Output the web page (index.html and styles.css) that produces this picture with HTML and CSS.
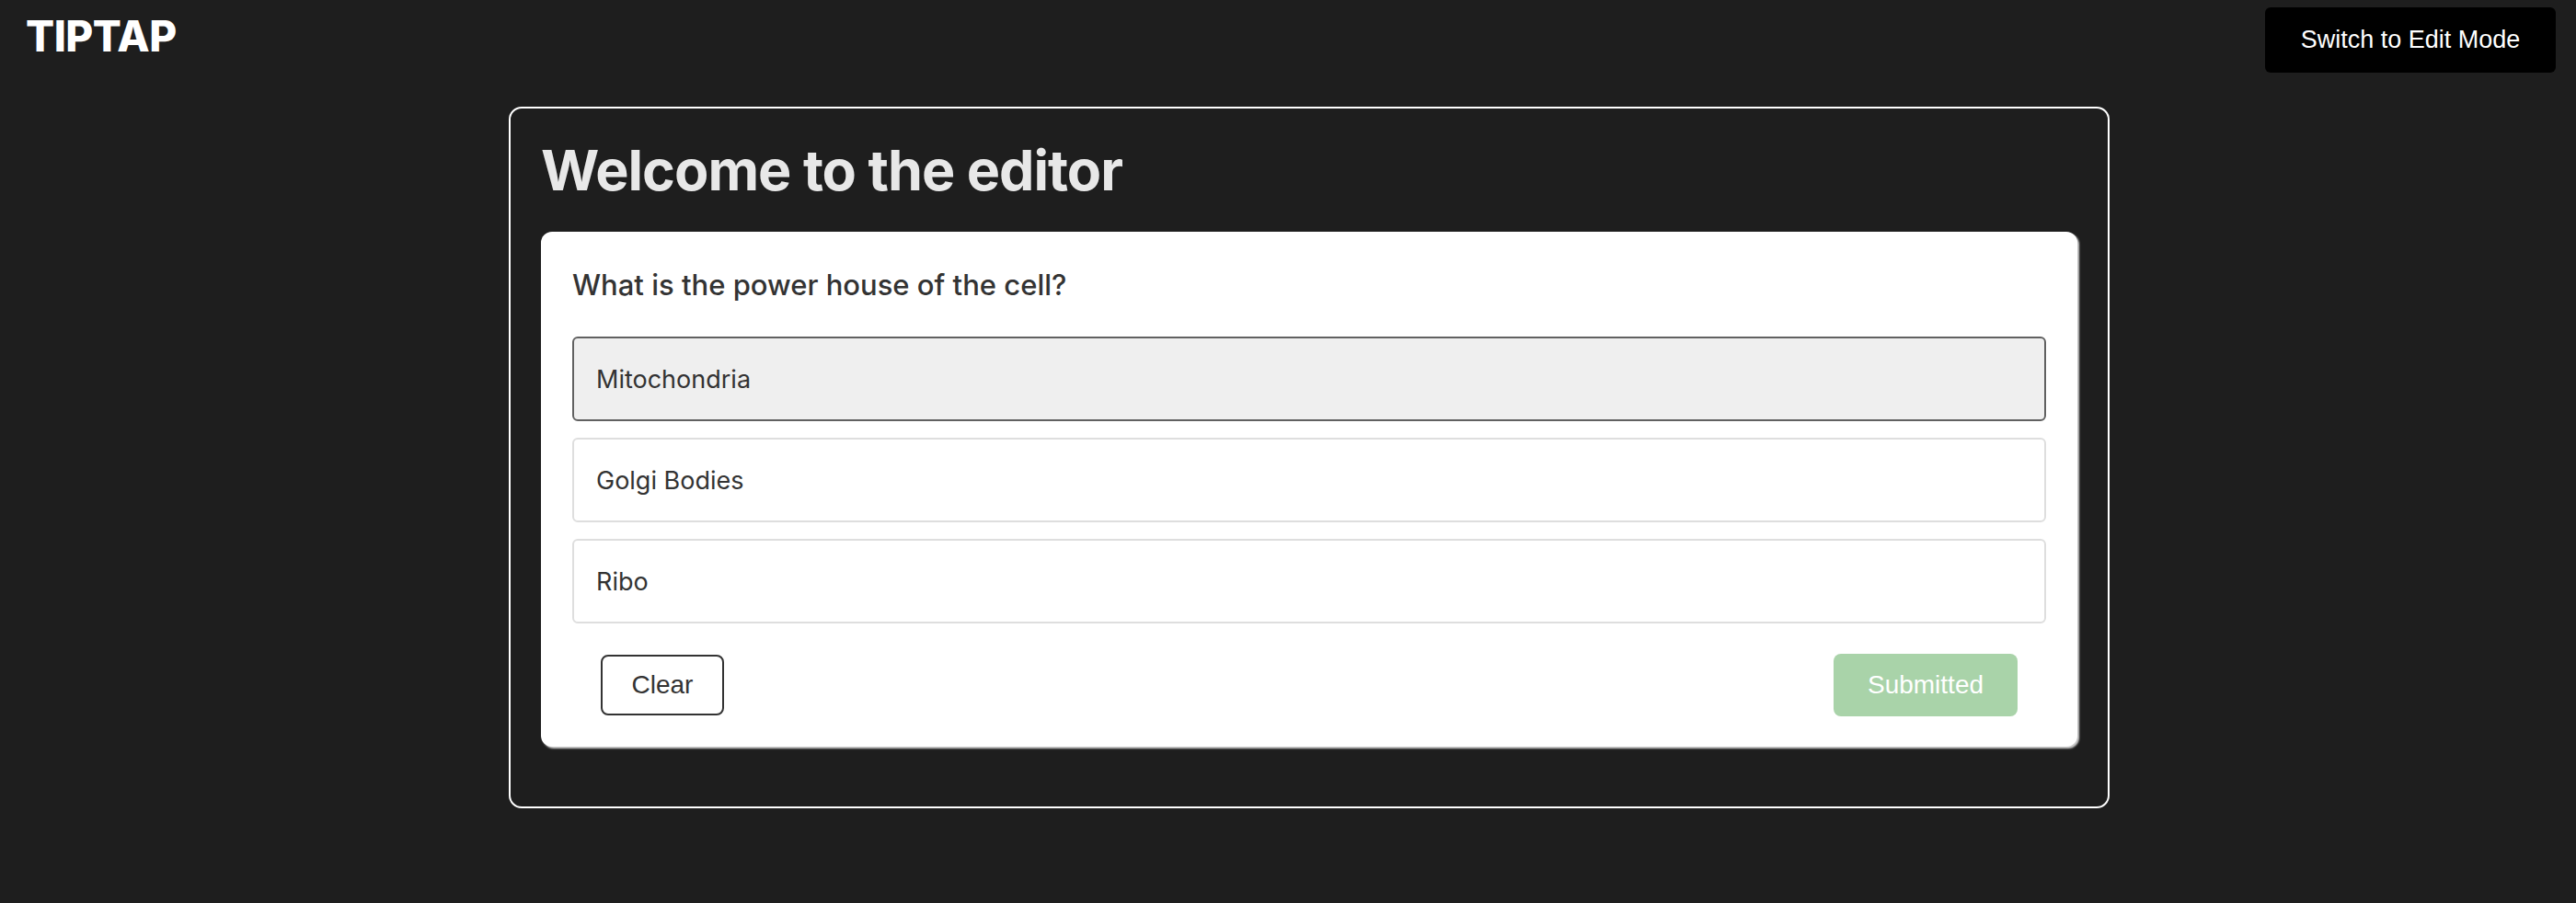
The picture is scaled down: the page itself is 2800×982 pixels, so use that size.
FILE: index.html
```html
<!DOCTYPE html>
<html>
<head>
<meta charset="utf-8">
<link rel="stylesheet" href="styles.css">
</head>
<body>
<header class="topbar">
  <div class="logo">TIPTAP</div>
  <button class="mode-btn">Switch to Edit Mode</button>
</header>
<main class="frame">
  <h1 class="title">Welcome to the editor</h1>
  <section class="quiz">
    <p class="question">What is the power house of the cell?</p>
    <div class="options">
      <div class="option selected">Mitochondria</div>
      <div class="option">Golgi Bodies</div>
      <div class="option">Ribo</div>
    </div>
    <div class="actions">
      <button class="btn-clear">Clear</button>
      <button class="btn-submitted">Submitted</button>
    </div>
  </section>
</main>
</body>
</html>
```
FILE: styles.css
```css
html, body {
  margin: 0;
  padding: 0;
}
body {
  background: #1e1e1e;
  font-family: Inter, "Noto Sans", sans-serif;
  width: 2800px;
  height: 982px;
  overflow: hidden;
}
.topbar {
  display: flex;
  justify-content: space-between;
  align-items: flex-start;
  padding: 8px 22px 0 28px;
}
.logo {
  font-family: Inter, sans-serif;
  font-weight: 800;
  font-size: 46px;
  line-height: 1.21;
  color: #ffffff;
  margin-top: 4px;
  letter-spacing: -0.5px;
}
.mode-btn {
  width: 316px;
  height: 71px;
  background: #000;
  color: #fff;
  border: none;
  border-radius: 6px;
  font-family: "Liberation Sans", Arial, sans-serif;
  font-size: 27px;
  padding: 0;
}
.frame {
  margin: 37px 0 0 553px;
  width: 1740px;
  height: 763px;
  box-sizing: border-box;
  border: 2px solid #ffffff;
  border-radius: 14px;
  padding: 30px 33px 0 33px;
}
.title {
  margin: 0 0 29px 0;
  font-size: 61px;
  font-weight: 700;
  line-height: 1.23;
  color: #e8e8e8;
  letter-spacing: -1px;
}
.quiz {
  box-sizing: border-box;
  background: #fff;
  border-radius: 12px;
  box-shadow: 2px 2px 2px #cfcfcf;
  padding: 40px 34px 33px 34px;
}
.question {
  margin: 0 0 38px 0;
  font-size: 31px;
  font-weight: 500;
  line-height: 1.17;
  color: #333;
}
.options {
  display: flex;
  flex-direction: column;
  gap: 18px;
}
.option {
  height: 92px;
  box-sizing: border-box;
  border: 2px solid #dedede;
  border-radius: 6px;
  display: flex;
  align-items: center;
  padding-left: 24px;
  font-size: 27px;
  color: #333;
}
.option.selected {
  background: #efefef;
  border-color: #616161;
}
.actions {
  display: flex;
  justify-content: space-between;
  align-items: center;
  margin: 33px 31px 0 31px;
}
.btn-clear {
  width: 134px;
  height: 66px;
  box-sizing: border-box;
  background: #fff;
  border: 2px solid #333;
  border-radius: 8px;
  font-family: "Liberation Sans", Arial, sans-serif;
  font-size: 28px;
  color: #333;
  padding: 0;
}
.btn-submitted {
  width: 200px;
  height: 68px;
  background: #a9d3a9;
  border: none;
  border-radius: 8px;
  font-family: "Liberation Sans", Arial, sans-serif;
  font-size: 28px;
  color: #fff;
  padding: 0;
}
```
